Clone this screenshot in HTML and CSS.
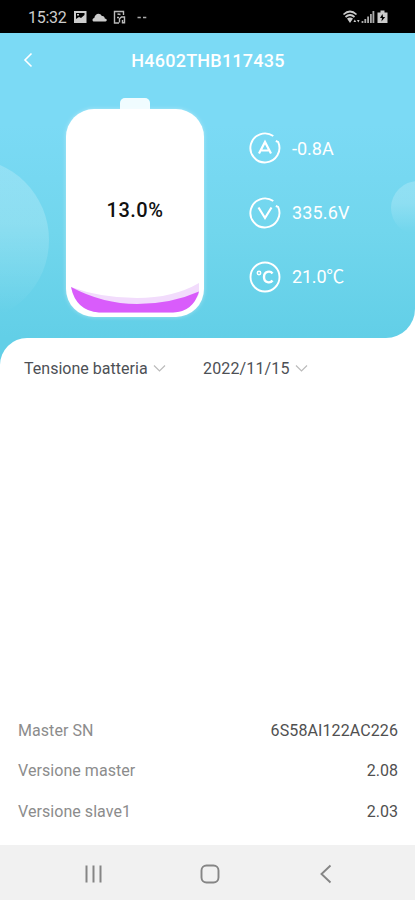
FILE: index.html
```html
<!DOCTYPE html>
<html lang="it">
<head>
<meta charset="utf-8">
<title>H4602THB117435</title>
<link rel="stylesheet" href="styles.css">
</head>
<body>
<div class="status">
  <span class="time">15:32</span>
  <svg class="status-left" width="78" height="16" viewBox="0 0 78 16">
    <path fill="#ccc" fill-rule="evenodd" d="M1 2h12.500v12H1zM3 4v6l3-2 2 1 3.500-3V4zM4 5h2v1.500H4z"/>
    <path fill="#ccc" d="M20.500 12.500c-1.500-.5-1.200-3.500.8-3.500.5-4.500 5.500-6 7.500-2 2-.3 2.800 1 3 2.500 2.500 0 2.500 3 .7 3z"/>
    <path fill="none" stroke="#bbb" stroke-width="1.400" d="M46 14h-4.500V2.500h9V6M44.500 5l3 .5M46.500 13.500V9.800l2-1.800h3v5.800h-2V11M44 8.500h2"/>
    <path stroke="#aaa" stroke-width="1.600" d="M64.500 8.500h3.300M70 8.500h3.300"/>
  </svg>
  <svg class="status-right" width="48" height="16" viewBox="0 0 48 16">
    <path fill="none" stroke="#ccc" stroke-width="1.700" d="M1.500 5.500q6.500-6 13 0M3.500 8q4.500-4 9 0"/>
    <path fill="#ccc" d="M5 9.500q3-2 6 0l-3 4.500zM11.500 13l1.300-2.500 1.300 2.500zM15 11h2.600l-1.300 2.500z"/>
    <path stroke="#aaa" stroke-width="1.800" d="M20.500 14v-2M23.300 14v-4M26.100 14V7.500M28.900 14V5M31.400 14V2"/>
    <path fill="#ccc" fill-rule="evenodd" d="M38.500 1.500h4v2H45.500V14h-10V3.500h3zM40.500 5 38 9h2l-.6 3.500L43.200 8H41z"/>
  </svg>
</div>
<main>
  <section class="hero">
    <svg class="bubbles" width="415" height="305" viewBox="0 0 415 305">
      <defs>
        <linearGradient id="fade" x1="0" y1="0" x2="0" y2="1">
          <stop offset="0" stop-color="#fff" stop-opacity=".2"/>
          <stop offset=".4" stop-color="#fff" stop-opacity=".19"/>
          <stop offset=".95" stop-color="#fff" stop-opacity="0"/>
        </linearGradient>
      </defs>
      <circle cx="-33" cy="207" r="82" fill="url(#fade)"/>
      <circle cx="418" cy="175" r="27" fill="url(#fade)"/>
    </svg>
    <header>
      <svg class="back" width="12" height="16" viewBox="0 0 12 16"><path d="M9.500 1.500 3 8l6.500 6.500" fill="none" stroke="#fff" stroke-width="1.600"/></svg>
      <h1>H4602THB117435</h1>
    </header>
    <div class="overview">
      <div class="battery">
        <div class="cap"></div>
        <div class="cell">
          <span class="charge">13.0%</span>
          <svg class="liquid" width="128" height="34" viewBox="0 0 128 34">
            <path fill="#f2dcfc" d="M0 8Q30 19 66 19T128 4V15Q119 33 102 33.500H28Q5 31 0 8z"/>
            <path fill="#d95cfb" d="M0 8Q32 25 66 25T128 12.500Q122 33 102 33.500H28Q5 32 0 8z"/>
          </svg>
        </div>
      </div>
      <ul class="readings">
        <li>
          <svg width="32" height="32" viewBox="0 0 32 32" fill="none" stroke="#fff"><path stroke-width="1.900" d="M24.300 4.100A14.500 14.500 0 1 0 29.100 9.900L26.800 9"/><path stroke-width="2.200" d="m10 21.500 6-11.500 6 11.500M12.500 18.500h7"/></svg>
          <span>-0.8A</span>
        </li>
        <li>
          <svg width="32" height="32" viewBox="0 0 32 32" fill="none" stroke="#fff"><path stroke-width="1.900" d="M24.300 4.100A14.500 14.500 0 1 0 29.100 9.900L26.800 9"/><path stroke-width="2.200" d="m9.500 10.500 6.500 10.500 6.500-10.500"/></svg>
          <span class="volts">335.6V</span>
        </li>
        <li>
          <svg width="32" height="32" viewBox="0 0 32 32" fill="none" stroke="#fff"><circle cx="16" cy="16" r="14.500" stroke-width="1.900"/><circle cx="10" cy="12" r="1.700" stroke-width="1.500"/><path stroke-width="2.400" d="M23.500 12.500C21.500 9.500 15 9.800 15 16s6.500 6.500 8.500 3.500"/></svg>
          <span class="temp">21.0℃</span>
        </li>
      </ul>
    </div>
  </section>
  <section class="sheet">
    <div class="filters">
      <div class="filter metric"><span>Tensione batteria</span><svg width="13" height="9" viewBox="0 0 13 9"><path d="m1 1.500 5.500 5.500L12 1.500" fill="none" stroke="#bbb" stroke-width="1.200"/></svg></div>
      <div class="filter date"><span>2022/11/15</span><svg width="13" height="9" viewBox="0 0 13 9"><path d="m1 1.500 5.500 5.500L12 1.500" fill="none" stroke="#bbb" stroke-width="1.200"/></svg></div>
    </div>
    <dl>
      <div class="row"><dt>Master SN</dt><dd class="serial">6S58AI122AC226</dd></div>
      <div class="row"><dt>Versione master</dt><dd>2.08</dd></div>
      <div class="row"><dt>Versione slave1</dt><dd>2.03</dd></div>
    </dl>
  </section>
</main>
<nav>
  <svg width="20" height="20" viewBox="0 0 20 20"><path d="M2.500 1.500v17M9.500 1.500v17M16.500 1.500v17" stroke="#858585" stroke-width="2"/></svg>
  <svg width="20" height="20" viewBox="0 0 20 20"><rect x="1.500" y="1.500" width="17" height="17" rx="5" fill="none" stroke="#858585" stroke-width="1.900"/></svg>
  <svg width="20" height="20" viewBox="0 0 20 20"><path d="M14.500 1.500 5.500 10l9 8.500" fill="none" stroke="#858585" stroke-width="1.900"/></svg>
</nav>
</body>
</html>
```
FILE: styles.css
```css
* { box-sizing: border-box; }
body {
  margin: 0;
  width: 415px;
  height: 900px;
  display: flex;
  flex-direction: column;
  font-family: Roboto, "Noto Sans CJK SC", sans-serif;
  background: #fff;
  overflow: hidden;
}
svg { display: block; flex: none; }
span, dt, dd, h1 { white-space: nowrap; }
.status {
  height: 33px;
  flex: none;
  display: flex;
  align-items: center;
  padding: 1px 25px 0 28px;
  background: #000;
  color: #ccc;
}
.time { width: 45px; font-size: 16px; letter-spacing: -.3px; }
.status-right { margin-left: auto; }
main {
  flex: 1;
  display: flex;
  flex-direction: column;
  background: linear-gradient(#62cfe7, #62cfe7) 0 305px / 60px 30px no-repeat, #fff;
}
.hero {
  position: relative;
  height: 305px;
  flex: none;
  border-bottom-right-radius: 29px;
  background: linear-gradient(#7bdaf5 0%, #7bdaf5 30%, #71d6ed 65%, #62cfe7 100%);
  overflow: hidden;
}
.bubbles { position: absolute; inset: 0; }
header {
  position: relative;
  height: 54px;
  display: grid;
  grid-template-columns: 40px 1fr 40px;
  align-items: center;
}
.back { margin-left: 22px; }
h1 {
  margin: 0;
  padding-left: 1px;
  text-align: center;
  color: #fff;
  font-size: 18px;
  font-weight: 500;
  letter-spacing: .22px;
}
.overview {
  position: relative;
  display: flex;
  padding: 11px 0 0 66px;
}
.battery { width: 138px; display: flex; flex-direction: column; align-items: center; }
.cap { width: 30px; height: 11px; background: #f0fcff; border-radius: 5px 5px 0 0; }
.cell {
  width: 138px;
  height: 208px;
  display: flex;
  flex-direction: column;
  align-items: center;
  justify-content: space-between;
  padding: 89px 0 4px;
  background: #fff;
  border-radius: 28px;
  box-shadow: 0 0 4px rgba(255, 255, 255, .4);
}
.charge { font-size: 20px; line-height: 24px; font-weight: 500; color: #111; letter-spacing: .5px; }
.readings {
  margin: 34px 0 0 45px;
  padding: 0;
  list-style: none;
  display: flex;
  flex-direction: column;
  gap: 32.500px;
}
.readings li {
  display: flex;
  align-items: center;
  gap: 11px;
  height: 32px;
  color: #fff;
  font-size: 18px;
}
.volts { letter-spacing: .15px; }
.temp { letter-spacing: -.2px; line-height: 20px; margin-bottom: 1px; }
.sheet {
  flex: 1;
  display: flex;
  flex-direction: column;
  justify-content: space-between;
  background: #fff;
  border-top-left-radius: 27px;
}
.filters {
  display: grid;
  grid-template-columns: 179px 1fr;
  padding: 18px 0 0 24px;
  color: #4d5055;
  font-size: 16px;
}
.filter { display: flex; align-items: center; gap: 5.500px; height: 24px; }
.metric { letter-spacing: .02px; }
.date { letter-spacing: .15px; }
dl { margin: 0 17px 13.500px 18px; }
.row {
  display: flex;
  align-items: center;
  justify-content: space-between;
  height: 40.500px;
  font-size: 16px;
}
dt { color: #8c8c8c; letter-spacing: .06px; }
dd { margin: 0; color: #505050; }
.serial { letter-spacing: .1px; }
nav {
  height: 55px;
  flex: none;
  display: flex;
  align-items: center;
  justify-content: space-between;
  padding: 2px 79px 0 84px;
  background: #f1f1f1;
}
```
